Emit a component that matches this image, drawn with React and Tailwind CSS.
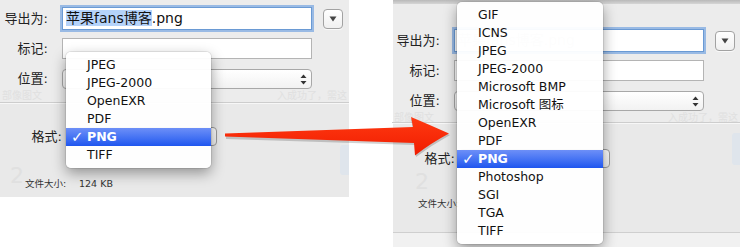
import React from "react";

const FONT = {
  fontFamily:
    '"Lucida Grande", "DejaVu Sans", "Noto Sans CJK SC", sans-serif',
};

const LEFT_ITEMS = ["JPEG", "JPEG-2000", "OpenEXR", "PDF", "PNG", "TIFF"];
const RIGHT_ITEMS = [
  "GIF",
  "ICNS",
  "JPEG",
  "JPEG-2000",
  "Microsoft BMP",
  "Microsoft 图标",
  "OpenEXR",
  "PDF",
  "PNG",
  "Photoshop",
  "SGI",
  "TGA",
  "TIFF",
];

function Stepper() {
  return (
    <svg width="7" height="11" viewBox="0 0 7 11" className="mr-[4px]">
      <path d="M3.5 0.5 L6.5 4 L0.5 4 Z" fill="#333" />
      <path d="M3.5 10.5 L6.5 7 L0.5 7 Z" fill="#333" />
    </svg>
  );
}

function MenuButton() {
  return (
    <div className="flex items-center justify-center w-[20px] h-[20px] rounded-[4px] border border-[#a2a2a2] bg-gradient-to-b from-white to-[#f0f0f0] shadow-[0_1px_0_rgba(255,255,255,0.7)]">
      <svg width="8" height="6" viewBox="0 0 8 6">
        <path d="M0.5 0.5 L7.5 0.5 L4 5.5 Z" fill="#444" />
      </svg>
    </div>
  );
}

function FormatMenu({ items, className }) {
  return (
    <div
      className={
        "absolute bg-white/[0.95] rounded-[5px] py-[4px] shadow-[0_5px_14px_rgba(0,0,0,0.38),0_0_0_1px_rgba(0,0,0,0.08)] " +
        className
      }
    >
      {items.map((item) =>
        item === "PNG" ? (
          <div
            key={item}
            className="flex items-center h-[18px] bg-gradient-to-b from-[#6d8ff7] to-[#1e55ef] text-white font-bold"
          >
            <span className="w-[21px] pl-[5px] text-[15px] leading-[18px] font-bold">
              ✓
            </span>
            <span>{item}</span>
          </div>
        ) : (
          <div
            key={item}
            className="flex items-center h-[18px] pl-[21px] text-[#111]"
          >
            {item}
          </div>
        )
      )}
    </div>
  );
}

function FieldRows({ faded }) {
  return (
    <div className="flex flex-col">
      <div className="flex items-center h-[23px]">
        <span className="w-[48px] text-right text-[13px] text-[#222] whitespace-nowrap">
          导出为:
        </span>
        <div className="ml-[14px] w-[250px] h-[23px] flex items-center bg-white border border-[#6a9ad4] shadow-[0_0_0_2px_rgba(126,170,225,0.75)] pl-[3px] text-[14px] text-[#111]">
          <span className={faded ? "opacity-20" : ""}>
            <span className="bg-[#b5d3fa]">苹果fans博客</span>.png
          </span>
        </div>
        <div className="ml-[11px]">
          <MenuButton />
        </div>
      </div>
      <div className="flex items-center h-[21px] mt-[8px]">
        <span className="w-[48px] text-right text-[13px] text-[#222]">
          标记:
        </span>
        <div className="ml-[14px] w-[250px] h-[21px] bg-white border border-[#b4b4b4]" />
      </div>
      <div className="flex items-center h-[20px] mt-[10px]">
        <span className="w-[48px] text-right text-[13px] text-[#222]">
          位置:
        </span>
        <div className="ml-[14px] w-[250px] h-[20px] flex items-center justify-end rounded-[4px] bg-gradient-to-b from-white to-[#f2f2f2] border border-[#a8a8a8]">
          <Stepper />
        </div>
      </div>
      <div className="flex justify-between mt-[1px] h-[12px] text-[10px] leading-[12px] text-[#e0e0e0]">
        <span className="pl-[2px]">部像图文</span>
        <span className="pr-[2px]">入成功了，需这</span>
      </div>
    </div>
  );
}

function FormatRow({ selectWidth }) {
  return (
    <div className="flex items-center h-[19px]">
      <span className="w-[62px] text-right text-[13px] text-[#222]">格式:</span>
      <div
        className={
          "ml-[4px] h-[19px] rounded-[4px] bg-gradient-to-b from-white to-[#eee] border border-[#9c9c9c] " +
          selectWidth
        }
      />
    </div>
  );
}

function FileSize({ showValue }) {
  return (
    <div className="flex items-center h-[12px] pl-[25px] text-[9.5px] text-[#333]">
      <span className="w-[54px]">文件大小:</span>
      {showValue && <span>124 KB</span>}
    </div>
  );
}

function Arrow() {
  return (
    <svg
      className="absolute left-[218px] top-[110px]"
      width="240"
      height="54"
      viewBox="218 110 240 54"
    >
      <defs>
        <linearGradient id="arrowFill" x1="0" y1="0" x2="0" y2="1">
          <stop offset="0" stopColor="#ff3a12" />
          <stop offset="1" stopColor="#f01c00" />
        </linearGradient>
      </defs>
      <path
        d="M226 136 L413 130 L411 119 Q430 127 450 135 Q432 145 416 157 L415 145 L226 139 Z"
        fill="rgba(0,0,0,0.18)"
      />
      <path
        d="M225 133.5 L413 127 L411 117 Q430 125 449 133.5 Q431 143 415 155.5 L414 143 L225 136.5 Z"
        fill="url(#arrowFill)"
      />
    </svg>
  );
}

export default function App() {
  return (
    <div
      className="relative flex w-[740px] h-[247px] overflow-hidden bg-white"
      style={FONT}
    >
      <div className="relative w-[349px] h-[197px] flex flex-col bg-[#ececec]">
        <div className="h-[103px] pt-[7px] border-b border-[#cdcdcd]">
          <FieldRows />
        </div>
        <div className="relative flex-1 flex flex-col bg-[#e9e9e9] shadow-[inset_0_1px_0_#f7f7f7]">
          <div className="absolute right-0 top-[42px] w-[9px] h-[30px] rounded-l-[3px] bg-[#dfe5ec]" />
          <span className="absolute left-[10px] top-[56px] text-[22px] text-[#e0e0e0]">
            2
          </span>
          <div className="mt-[24px]">
            <FormatRow selectWidth="w-[151px]" />
          </div>
          <div className="mt-[32px]">
            <FileSize showValue />
          </div>
        </div>
        <FormatMenu
          items={LEFT_ITEMS}
          className="left-[66px] top-[52px] w-[145px] text-[12.5px]"
        />
      </div>

      <div className="relative ml-auto w-[347px] h-[247px] flex flex-col bg-[#ececec]">
        <div className="h-[4px] bg-gradient-to-b from-[#b9b9b9] to-[#d6d6d6]" />
        <div className="h-[119px] pt-[25px] border-b border-[#cdcdcd] -ml-[1px]">
          <FieldRows faded />
        </div>
        <div className="relative flex-1 flex flex-col bg-[#e9e9e9] shadow-[inset_0_1px_0_#f7f7f7]">
          <div className="absolute right-0 top-[10px] w-[8px] h-[32px] rounded-l-[3px] bg-[#dfe5ec]" />
          <span className="absolute left-[22px] top-[42px] text-[22px] text-[#e0e0e0]">
            2
          </span>
          <div className="mt-[26px]">
            <FormatRow selectWidth="w-[151px]" />
          </div>
          <div className="mt-[30px]">
            <FileSize />
          </div>
          <div className="mt-auto h-[15px] border-t border-[#cfcfcf] bg-[#f1f1f1]" />
        </div>
        <FormatMenu
          items={RIGHT_ITEMS}
          className="left-[64px] top-[2px] w-[146px] text-[12.5px]"
        />
      </div>

      <Arrow />
    </div>
  );
}
